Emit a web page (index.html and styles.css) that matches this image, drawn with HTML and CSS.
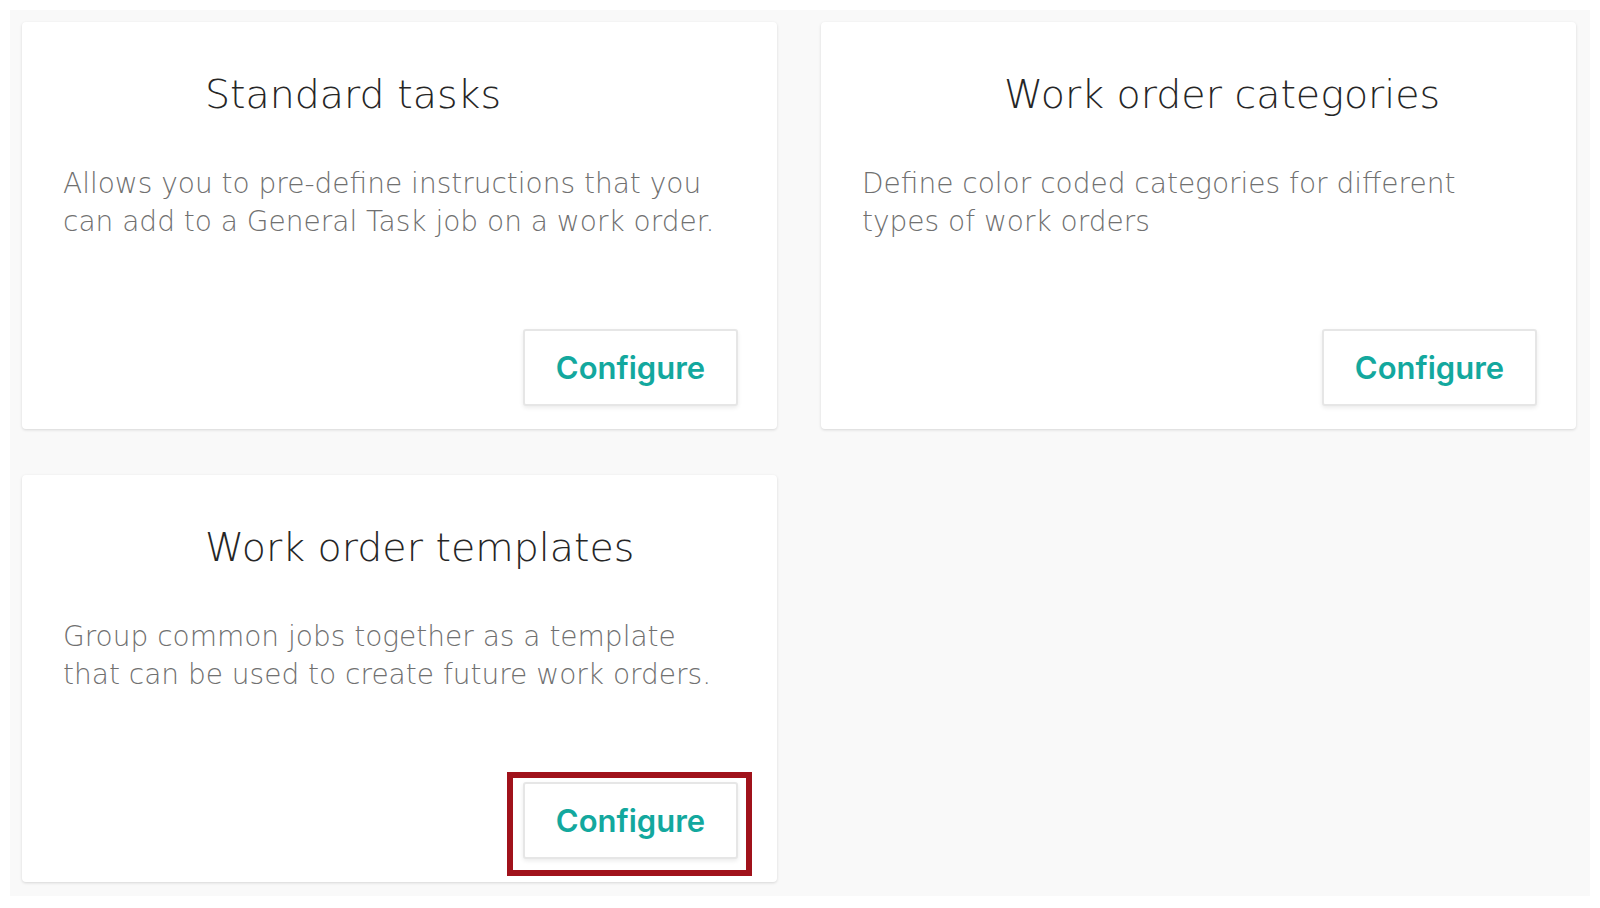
FILE: index.html
```html
<!DOCTYPE html>
<html>
    <head>
        <meta charset='UTF-8'>
        <link rel="stylesheet" href="styles.css">
    </head>
    <body>
        <main class="settings">
            <section class="card">
                <h2 class="card-title">Standard tasks</h2>
                <p class="card-text">Allows you to pre-define instructions that you can add to a General Task job on a work order.</p>
                <div class="card-actions">
                    <button class="configure">Configure</button>
                </div>
            </section>
            <section class="card">
                <h2 class="card-title">Work order categories</h2>
                <p class="card-text">Define color coded categories for different types of work orders</p>
                <div class="card-actions">
                    <button class="configure">Configure</button>
                </div>
            </section>
            <section class="card">
                <h2 class="card-title">Work order templates</h2>
                <p class="card-text">Group common jobs together as a template that can be used to create future work orders.</p>
                <div class="card-actions">
                    <button class="configure highlighted">Configure</button>
                </div>
            </section>
        </main>
    </body>
</html>
```

FILE: styles.css
```css
html, body {
    margin: 0;
    padding: 0;
    background: #fff;
}

body {
    font-family: 'DejaVu Sans', 'Lato', sans-serif;
    -webkit-font-smoothing: antialiased;
}

.settings {
    display: grid;
    grid-template-columns: 755px 755px;
    grid-template-rows: 407px 407px;
    column-gap: 44px;
    row-gap: 46px;
    margin: 10px;
    padding: 12px 12px 14px 12px;
    background: #f9f9f9;
}

.card {
    display: flex;
    flex-direction: column;
    padding: 0 39px 23px 41px;
    background: #fff;
    border-radius: 4px;
    box-shadow: 0 1px 3px rgba(0, 0, 0, .14);
}

.card-title {
    margin: 47px 0 0 142px;
    font-size: 39.5px;
    font-weight: 200;
    line-height: 50px;
    color: #262626;
}

.card-text {
    max-width: 660px;
    margin: 46px 0 0 0;
    font-size: 28px;
    font-weight: 200;
    line-height: 37.5px;
    color: #707070;
}

.card-actions {
    display: flex;
    justify-content: flex-end;
    margin-top: auto;
}

.configure {
    position: relative;
    width: 215px;
    height: 77px;
    padding: 0;
    border: 2px solid #e6e6e6;
    border-radius: 3px;
    background: #fff;
    box-shadow: 0 2px 4px rgba(0, 0, 0, .08);
    font-family: 'Inter', 'Lato', sans-serif;
    font-size: 31px;
    font-weight: 600;
    color: #13a89e;
    cursor: pointer;
}

.highlighted::after {
    content: '';
    position: absolute;
    left: -18px;
    top: -12px;
    right: -16px;
    bottom: -19px;
    border: 6px solid #a0121b;
}
```
